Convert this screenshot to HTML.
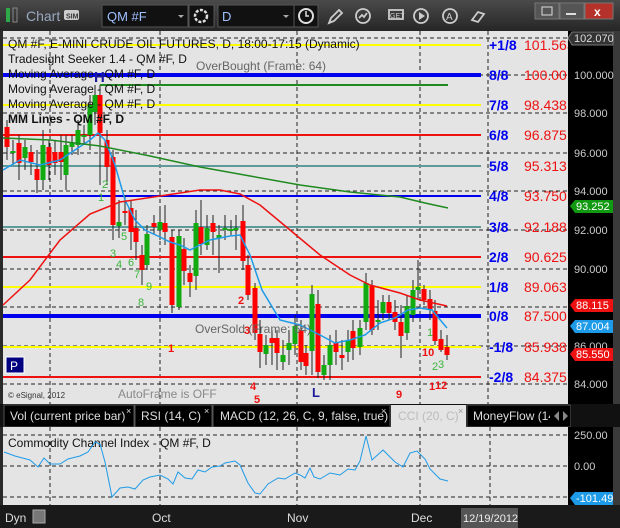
<!DOCTYPE html>
<html><head><meta charset="utf-8"><style>
body{margin:0;width:620px;height:528px;overflow:hidden;background:#2a2a2a;font-family:"Liberation Sans",sans-serif}
svg{display:block}
</style></head><body>
<svg id="s" width="620" height="528" xmlns="http://www.w3.org/2000/svg" font-family="Liberation Sans, sans-serif">
<defs><linearGradient id="tb" x1="0" y1="0" x2="0" y2="1"><stop offset="0" stop-color="#4a4a4a"/><stop offset="1" stop-color="#262626"/></linearGradient></defs>
<rect x="0" y="0" width="620" height="31" fill="url(#tb)"/>
<rect x="6" y="8" width="4" height="14" fill="#2fa84a"/><rect x="13" y="8" width="4" height="14" fill="none" stroke="#888" stroke-width="1"/>
<text x="26" y="21" font-size="14" fill="#9aa8c0">Chart</text>
<rect x="64" y="10" width="15" height="10" rx="2" fill="#ccc"/><text x="66" y="18.5" font-size="7" font-weight="bold" fill="#333">SIM</text>
<rect x="102" y="5" width="86" height="22" fill="#111" stroke="#555"/><text x="107" y="21" font-size="13" fill="#9ec0ff">QM #F</text><path d="M178 15 l3 3 3-3z" fill="#aaa"/>
<rect x="189" y="5" width="25" height="22" fill="#111" stroke="#555"/><circle cx="201" cy="16" r="6" fill="none" stroke="#ddd" stroke-width="2.5" stroke-dasharray="3 1.5"/>
<rect x="218" y="5" width="76" height="22" fill="#111" stroke="#555"/><text x="222" y="21" font-size="13" fill="#9ec0ff">D</text><path d="M283 15 l3 3 3-3z" fill="#aaa"/>
<rect x="294" y="5" width="24" height="22" fill="#111" stroke="#555"/><circle cx="306" cy="16" r="7" fill="none" stroke="#ddd" stroke-width="2"/><path d="M306 11v5h3" stroke="#ddd" stroke-width="1.5" fill="none"/>
<g stroke="#ccc" stroke-width="1.8" fill="none">
<path d="M329 23l2-5 8-8 3 3-8 8z"/>
<circle cx="363" cy="16" r="7"/><path d="M359 18l3-3 2 2 3-4"/>
<rect x="389" y="10" width="14" height="9"/>
<circle cx="421" cy="16" r="7"/><circle cx="450" cy="16" r="7"/>
<path d="M472 20l6-8 6 2-6 8z"/>
</g>
<path d="M419 12v8l6-4z" fill="#ccc"/><text x="446" y="20" font-size="10" fill="#ccc">A</text><text x="390" y="18" font-size="7" fill="#ccc">GET</text>
<rect x="535" y="3" width="24" height="16" fill="#555" stroke="#777"/><rect x="560" y="3" width="24" height="16" fill="#555" stroke="#777"/><rect x="585" y="3" width="28" height="16" fill="#b5322a" stroke="#777"/>
<text x="594" y="16" font-size="12" font-weight="bold" fill="#fff">x</text><rect x="566" y="13" width="10" height="2" fill="#ddd"/><rect x="542" y="7" width="10" height="8" fill="none" stroke="#ddd"/>
<!-- main chart -->
<rect x="3" y="31" width="567" height="373" fill="#e4e4e4"/>
<g id="grid" stroke="#222" stroke-dasharray="4 3" stroke-width="1"></g>
<g id="mm"></g>
<g id="candles"></g>
<polyline fill="none" stroke="#1e9be8" stroke-width="1.5" points="3,170 20,160 40,165 60,160 75,150 90,140 98,133 105,140 115,165 125,200 135,220 145,230 160,237 170,242 180,245 190,250 200,245 210,240 230,236 240,235 250,255 262,290 280,320 300,325 320,335 335,343 350,340 365,335 380,323 395,318 408,310 420,308 432,310 447,328"/>
<polyline fill="none" stroke="#ee1111" stroke-width="1.5" points="3,305 30,280 60,240 90,214 120,202 160,196 200,190 220,190 240,194 260,205 290,230 320,255 350,275 370,285 400,293 420,300 447,306"/>
<polyline fill="none" stroke="#1f8a1f" stroke-width="1.5" points="3,138 50,140 100,146 150,156 200,167 250,176 300,185 350,192 400,197 425,203 448,208"/>
<line x1="100" y1="85" x2="448" y2="85" stroke="#1f8a1f" stroke-width="2"/>
<g font-size="12" fill="#111">
<text x="8" y="48">QM #F, E-MINI CRUDE OIL FUTURES, D, 18:00-17:15 (Dynamic)</text>
<text x="8" y="63">Tradesight Seeker 1.4 - QM #F, D</text>
<text x="8" y="78">Moving Average - QM #F, D</text>
<text x="8" y="93">Moving Average - QM #F, D</text>
<text x="8" y="108">Moving Average - QM #F, D</text>
<text x="8" y="123" font-weight="bold">MM Lines - QM #F, D</text>
</g>
<text x="196" y="70" font-size="12" fill="#666">OverBought (Frame: 64)</text>
<text x="195" y="333" font-size="12" fill="#666">OverSold (Frame: 64)</text>
<text x="118" y="398" font-size="12" fill="#888">AutoFrame is OFF</text>
<text x="8" y="398" font-size="8" fill="#333">© eSignal, 2012</text>
<rect x="6" y="357" width="18" height="16" fill="#000080" stroke="#fff"/><text x="10" y="370" font-size="12" fill="#fff">P</text>
<text x="94" y="82" font-size="15" font-weight="bold" fill="#1a1a9a">H</text>
<text x="312" y="397" font-size="13" font-weight="bold" fill="#1a1a9a">L</text>
<g font-size="11" fill="#3cb53c">
<text x="102" y="188">2</text><text x="98" y="201">1</text><text x="121" y="240">5</text><text x="110" y="257">3</text><text x="116" y="268">4</text><text x="128" y="266">6</text><text x="134" y="278">7</text><text x="146" y="290">9</text><text x="138" y="306">8</text><text x="427" y="336">1</text><text x="432" y="370">2</text><text x="438" y="368">3</text>
</g>
<g font-size="11" fill="#ee1111" font-weight="bold">
<text x="168" y="352">1</text><text x="238" y="304">2</text><text x="244" y="334">3</text><text x="250" y="390">4</text><text x="254" y="403">5</text><text x="396" y="398">9</text><text x="422" y="356">10</text><text x="429" y="390">1</text><text x="435" y="389">12</text>
</g>
<g id="rl"></g>
<rect x="568" y="31" width="45" height="373" fill="#000"/>
<rect x="613" y="31" width="7" height="497" fill="#3a3a3a"/>
<path d="M568 38l4-6h41v13h-41z" fill="#333" stroke="#777"/><text x="574" y="42" font-size="11" fill="#ddd">102.070</text>
<g id="ax" font-size="11" fill="#ccc"></g>
<g font-size="11" fill="#fff">
<path d="M570 206l5-6h38v13h-38z" fill="#119911"/><text x="576" y="210">93.252</text>
<path d="M570 305l5-6h38v13h-38z" fill="#ee1111"/><text x="576" y="309">88.115</text>
<path d="M570 326l5-6h38v13h-38z" fill="#1e9be8"/><text x="576" y="330">87.004</text>
<path d="M570 354l5-6h38v13h-38z" fill="#ee1111"/><text x="576" y="358">85.550</text>
</g>
<!-- tabs -->
<rect x="0" y="404" width="620" height="23" fill="#111"/>
<g font-size="12" fill="#ddd">
<rect x="4" y="405" width="130" height="22" fill="#000" stroke="#555"/><text x="10" y="420">Vol (current price bar)</text><text x="126" y="414" font-size="9">×</text>
<rect x="135" y="405" width="77" height="22" fill="#000" stroke="#555"/><text x="141" y="420">RSI (14, C)</text><text x="204" y="414" font-size="9">×</text>
<rect x="213" y="405" width="177" height="22" fill="#000" stroke="#555"/><text x="220" y="420">MACD (12, 26, C, 9, false, true)</text><text x="381" y="414" font-size="9">×</text>
<rect x="391" y="405" width="75" height="22" fill="#e4e4e4"/><text x="398" y="420" fill="#bbb">CCI (20, C)</text><text x="458" y="414" font-size="9" fill="#999">×</text>
<rect x="467" y="405" width="103" height="22" fill="#000" stroke="#555"/><text x="473" y="420">MoneyFlow (14</text>
<rect x="550" y="406" width="20" height="20" fill="#000"/>
<path d="M554 416l5-5v10z M563 411l5 5-5 5z" fill="#888"/>
</g>
<rect x="3" y="427" width="567" height="78" fill="#e4e4e4"/>
<rect x="568" y="427" width="45" height="78" fill="#000"/>
<g stroke="#222" stroke-dasharray="4 3"><line x1="3" y1="435" x2="570" y2="435"/><line x1="3" y1="466" x2="570" y2="466"/><line x1="3" y1="497" x2="570" y2="497"/><line x1="50" y1="427" x2="50" y2="505"/><line x1="160" y1="427" x2="160" y2="505"/><line x1="297" y1="427" x2="297" y2="505"/><line x1="420" y1="427" x2="420" y2="505"/><line x1="490" y1="427" x2="490" y2="505"/></g>
<text x="8" y="447" font-size="12" fill="#111">Commodity Channel Index - QM #F, D</text>
<polyline fill="none" stroke="#1e9be8" stroke-width="1" points="4,452 15,456 30,460 38,467 44,458 50,464 60,464 68,459 80,456 88,452 95,442 100,444 105,462 112,497 120,488 128,487 135,489 143,480 150,477 160,475 168,479 173,484 178,472 185,478 192,479 198,470 205,472 212,467 220,466 225,463 235,461 240,465 248,483 255,493 260,494 268,484 278,478 285,479 295,473 300,475 305,478 310,468 314,477 320,479 330,473 340,475 348,469 355,470 360,461 366,436 372,460 383,450 395,462 403,467 410,453 417,451 425,459 430,469 440,479 448,481"/>
<g font-size="11" fill="#ccc"><text x="574" y="439">250.00</text><text x="574" y="470">0.00</text><text x="572" y="501">-250.00</text></g>
<path d="M570 498l5-6h38v13h-38z" fill="#1e9be8"/><text x="576" y="502" font-size="11" fill="#fff">-101.49</text>
<rect x="0" y="505" width="620" height="23" fill="#1a1a1a"/>
<text x="5" y="522" font-size="12" fill="#ddd">Dyn</text><rect x="33" y="510" width="12" height="13" fill="#777" stroke="#aaa"/>
<g font-size="12" fill="#ddd"><text x="152" y="522">Oct</text><text x="287" y="522">Nov</text><text x="411" y="522">Dec</text></g>
<rect x="461" y="508" width="57" height="20" fill="#555"/><text x="463" y="522" font-size="11" fill="#eee">12/19/2012</text>
</svg>
<script>
var NS="http://www.w3.org/2000/svg";
function el(p,t,a){var e=document.createElementNS(NS,t);for(var k in a)e.setAttribute(k,a[k]);document.getElementById(p).appendChild(e);return e;}
[50,160,297,420,488].forEach(function(x){el("grid","line",{x1:x,y1:31,x2:x,y2:404});});
[38,75,113,153,191,230,269,307,346,384].forEach(function(y){el("grid","line",{x1:3,y1:y,x2:570,y2:y});});
var mm=[[45,"#ffff00","+1/8","101.563",2],[75,"#0000ee","8/8","100.00",4],[105,"#ffff00","7/8","98.438",2],[135,"#ee1111","6/8","96.875",2],[166,"#5f9a9a","5/8","95.313",2],[196,"#0000ee","4/8","93.750",2],[227,"#5f9a9a","3/8","92.188",2],[257,"#ee1111","2/8","90.625",2],[287,"#ffff00","1/8","89.063",2],[316,"#0000ee","0/8","87.500",4],[347,"#ffff00","-1/8","85.938",2],[377,"#ee1111","-2/8","84.375",2]];
mm.forEach(function(m){el("mm","line",{x1:3,y1:m[0],x2:481,y2:m[0],stroke:m[1],"stroke-width":m[4]});
var t=el("rl","text",{x:489,y:m[0]+5,"font-size":14,"font-weight":"bold",fill:"#0000ee"});t.textContent=m[2];
var v=el("rl","text",{x:524,y:m[0]+5,"font-size":14,fill:"#ee1111"});v.textContent=m[3];});
[[100,75],[98,113],[96,153],[94,191],[92,230],[90,269],[86,346],[84,384]].forEach(function(a){var t=el("ax","text",{x:574,y:a[1]+4});t.textContent=a[0].toFixed(3);});
var C=[[7,127,147,120,160,"r"],[13,151,153,140,165,"g"],[19,143,163,135,180,"r"],[25,147,158,140,170,"g"],[31,152,162,145,175,"r"],[37,169,180,150,193,"r"],[43,145,180,130,190,"g"],[49,147,165,140,180,"r"],[55,152,163,140,175,"r"],[61,152,162,135,180,"r"],[66,145,175,135,190,"g"],[72,143,147,135,155,"g"],[78,130,145,120,155,"g"],[84,135,137,125,145,"g"],[90,105,135,95,150,"g"],[95,95,112,85,125,"g"],[100,95,133,85,185,"r"],[107,140,167,130,185,"r"],[113,157,225,150,240,"r"],[119,222,226,200,238,"g"],[125,211,213,195,225,"r"],[131,208,232,200,250,"r"],[136,228,242,210,260,"r"],[142,255,270,245,285,"r"],[147,234,265,225,270,"g"],[154,223,227,215,235,"r"],[160,222,230,210,240,"g"],[165,223,232,205,245,"r"],[172,237,305,230,313,"r"],[179,236,307,230,310,"g"],[184,249,271,238,285,"r"],[190,273,282,265,297,"r"],[196,223,276,210,290,"g"],[201,227,244,200,255,"r"],[207,228,245,215,250,"g"],[213,223,232,215,255,"r"],[219,235,238,225,273,"g"],[225,228,230,215,240,"g"],[231,229,231,220,235,"g"],[236,228,230,215,250,"g"],[243,221,261,205,270,"r"],[248,265,295,255,300,"r"],[255,288,333,283,340,"r"],[260,334,352,320,368,"r"],[266,345,354,335,365,"g"],[272,338,343,330,365,"r"],[277,338,353,330,370,"r"],[283,355,362,340,370,"g"],[289,343,350,330,365,"g"],[295,326,344,315,355,"g"],[301,330,362,320,370,"r"],[306,353,366,345,375,"r"],[312,294,351,285,375,"g"],[318,304,372,290,378,"r"],[324,365,375,355,380,"g"],[330,345,365,335,380,"g"],[336,343,352,330,365,"r"],[342,355,358,340,370,"r"],[348,340,352,330,362,"g"],[353,331,348,320,360,"r"],[360,328,347,320,355,"g"],[366,283,322,273,330,"g"],[372,286,330,280,335,"r"],[378,320,322,300,330,"g"],[383,302,313,295,320,"g"],[389,302,313,295,320,"r"],[395,312,322,300,330,"r"],[401,322,336,305,358,"r"],[407,306,333,295,340,"g"],[413,290,315,280,322,"g"],[418,287,290,260,300,"g"],[424,289,300,285,305,"r"],[430,299,310,290,320,"r"],[435,311,341,300,345,"r"],[441,339,350,330,352,"r"],[447,347,355,335,360,"r"]];
C.forEach(function(c){var col=c[5]=="g"?"#11aa11":"#ff0000";el("candles","line",{x1:c[0],y1:c[3],x2:c[0],y2:c[4],stroke:"#222","stroke-width":1});el("candles","rect",{x:c[0]-2.5,y:c[1],width:5,height:Math.max(2,c[2]-c[1]),fill:col});});
</script>
</body></html>
